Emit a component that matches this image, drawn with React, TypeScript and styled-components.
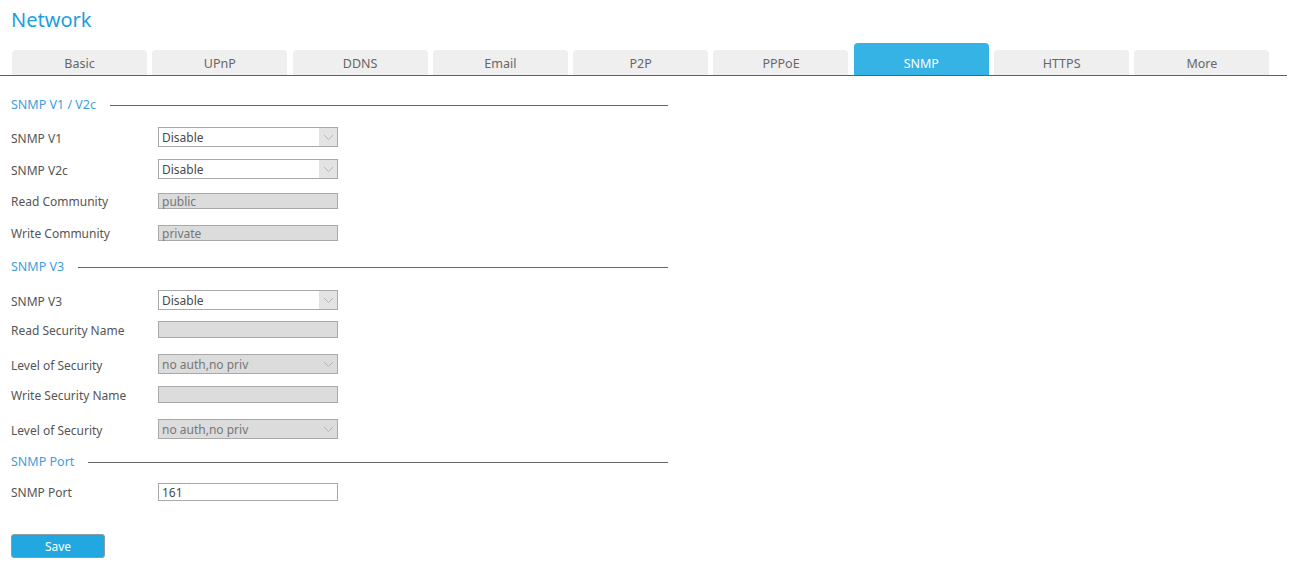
import React from 'react';
import styled, { createGlobalStyle } from 'styled-components';

const GlobalStyle = createGlobalStyle`
  html, body {
    margin: 0;
    padding: 0;
    background: #ffffff;
    font-family: "Noto Sans", "Open Sans", sans-serif;
  }
`;

const Page = styled.div`
  width: 1293px;
  min-height: 571px;
  box-sizing: border-box;
  padding-top: 6px;
`;

const Title = styled.h1`
  margin: 0 0 0 11px;
  font-size: 20px;
  font-weight: 400;
  line-height: 28px;
  color: #1e9fd9;
`;

const TabBar = styled.div`
  display: flex;
  align-items: flex-end;
  gap: 5.3px;
  margin-top: 9px;
  padding-left: 12px;
  width: 1287px;
  box-sizing: border-box;
  border-bottom: 1px solid #606060;
`;

const Tab = styled.div<{ $active?: boolean }>`
  width: 135px;
  flex-shrink: 0;
  height: ${p => (p.$active ? '32px' : '25px')};
  border-radius: 4px 4px 0 0;
  background: ${p => (p.$active ? '#35b3e5' : '#efefef')};
  color: ${p => (p.$active ? '#ffffff' : '#666666')};
  font-size: 12.5px;
  display: flex;
  align-items: flex-end;
  justify-content: center;
  padding-bottom: 3px;
  box-sizing: border-box;
`;

const Content = styled.div`
  width: 668px;
  padding-left: 11px;
  box-sizing: border-box;
`;

const SectionHead = styled.div<{ $top: number }>`
  display: flex;
  align-items: center;
  gap: 14px;
  margin-top: ${p => p.$top}px;
  height: 18px;
  color: #3d9ede;
  font-size: 12.5px;
  &::after {
    content: '';
    flex: 1;
    height: 1px;
    border-top: 1px solid #666;
    margin-top: 4px;
  }
`;

const Row = styled.div<{ $top: number }>`
  display: grid;
  grid-template-columns: 147px 180px;
  align-items: center;
  margin-top: ${p => p.$top}px;
`;

const Label = styled.div<{ $shift?: number }>`
  font-size: 12px;
  line-height: 16px;
  color: #555;
  position: relative;
  top: ${p => p.$shift ?? 1}px;
`;

const Field = styled.div<{ $disabled?: boolean; $h?: number }>`
  height: ${p => p.$h ?? 20}px;
  box-sizing: border-box;
  border: 1px solid #a9a9a9;
  background: ${p => (p.$disabled ? '#dcdcdc' : '#ffffff')};
  color: ${p => (p.$disabled ? '#777' : '#4a4a4a')};
  font-size: 12px;
  display: flex;
  align-items: center;
  padding-left: 3px;
  position: relative;
`;

const Arrow = styled.span<{ $disabled?: boolean }>`
  position: absolute;
  right: 0;
  top: 0;
  bottom: 0;
  width: 18px;
  background: ${p => (p.$disabled ? '#dcdcdc' : '#e3e3e3')};
  display: flex;
  align-items: center;
  justify-content: center;
`;

const SaveButton = styled.button`
  display: block;
  margin: 33px 0 0 11px;
  width: 94px;
  height: 24px;
  border: 1px solid #8c9aa3;
  border-radius: 3px;
  background: #22a8e1;
  color: #fff;
  font-family: inherit;
  font-size: 12px;
  padding: 0;
`;

const Chevron = () => (
  <svg width="11" height="7" viewBox="0 0 11 7">
    <path d="M1 1 L5.5 5.5 L10 1" fill="none" stroke="#b5b5b5" strokeWidth="1" />
  </svg>
);

const Select = ({ value, disabled }: { value: string; disabled?: boolean }) => (
  <Field $disabled={disabled}>
    {value}
    <Arrow $disabled={disabled}>
      <Chevron />
    </Arrow>
  </Field>
);

const tabs = ['Basic', 'UPnP', 'DDNS', 'Email', 'P2P', 'PPPoE', 'SNMP', 'HTTPS', 'More'];

export default function App() {
  return (
    <Page>
      <GlobalStyle />
      <Title>Network</Title>
      <TabBar>
        {tabs.map(t => (
          <Tab key={t} $active={t === 'SNMP'}>
            {t}
          </Tab>
        ))}
      </TabBar>
      <Content>
        <SectionHead $top={19}>SNMP V1 / V2c</SectionHead>
        <Row $top={14}>
          <Label $shift={2}>SNMP V1</Label>
          <Select value="Disable" />
        </Row>
        <Row $top={12}>
          <Label $shift={2}>SNMP V2c</Label>
          <Select value="Disable" />
        </Row>
        <Row $top={14}>
          <Label>Read Community</Label>
          <Field $disabled $h={16}>public</Field>
        </Row>
        <Row $top={16}>
          <Label>Write Community</Label>
          <Field $disabled $h={16}>private</Field>
        </Row>
        <SectionHead $top={16}>SNMP V3</SectionHead>
        <Row $top={15}>
          <Label $shift={2}>SNMP V3</Label>
          <Select value="Disable" />
        </Row>
        <Row $top={11}>
          <Label>Read Security Name</Label>
          <Field $disabled $h={17} />
        </Row>
        <Row $top={16}>
          <Label $shift={2}>Level of Security</Label>
          <Select value="no auth,no priv" disabled />
        </Row>
        <Row $top={12}>
          <Label>Write Security Name</Label>
          <Field $disabled $h={17} />
        </Row>
        <Row $top={16}>
          <Label $shift={2}>Level of Security</Label>
          <Select value="no auth,no priv" disabled />
        </Row>
        <SectionHead $top={13}>SNMP Port</SectionHead>
        <Row $top={13}>
          <Label $shift={1}>SNMP Port</Label>
          <Field $h={18}>161</Field>
        </Row>
      </Content>
      <SaveButton>Save</SaveButton>
    </Page>
  );
}
